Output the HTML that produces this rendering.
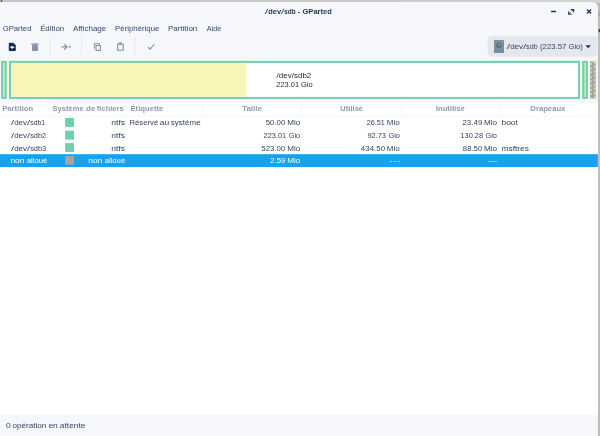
<!DOCTYPE html>
<html lang="fr">
<head>
<meta charset="utf-8">
<title>/dev/sdb - GParted</title>
<style>
html,body{margin:0;padding:0;}
body{width:600px;height:436px;overflow:hidden;background:#c8c8c8;position:relative;
  font-family:"Liberation Sans","DejaVu Sans",sans-serif;font-size:7.6px;color:#24344f;}
#root{position:absolute;left:0;top:0;width:600px;height:436px;overflow:hidden;will-change:transform;}
#root>*{position:absolute;}
.t{left:0;white-space:nowrap;line-height:12px;height:12px;font-size:0;}
.w{display:inline-block;width:0;line-height:12px;vertical-align:top;transform-origin:0 0;}
</style>
</head>
<body>
<div id="root">
<svg id="gfx" style="left:0;top:0" width="600" height="436" viewBox="0 0 600 436">
  <!-- desktop behind the window -->
  <rect x="0" y="0" width="600" height="436" fill="#bebebe"/>
  <rect x="0" y="0" width="200" height="3" fill="#c5c5c5"/>
  <rect x="200" y="0" width="200" height="3" fill="#c9c9c9"/>
  <rect x="400" y="0" width="120" height="3" fill="#cdcdcd"/>
  <rect x="520" y="0" width="80" height="3" fill="#d4d4d4"/>
  <rect x="0.900" y="0" width="1.300" height="2.400" fill="#555"/>
  <rect x="598.200" y="12" width="1.800" height="0.900" fill="#8e8e8e"/>
  <rect x="598.200" y="14.600" width="1.800" height="0.900" fill="#8e8e8e"/>
  <rect x="598.600" y="29" width="1.400" height="3.200" fill="#3e3e3e"/>
  <!-- window -->
  <path d="M0 436V3.200Q0 1.900 1.300 1.900H592.400A5.500 5.500 0 0 1 597.900 7.400V436z" fill="#f6f7fb"/>
  <!-- table -->
  <rect x="0" y="102.700" width="597.900" height="312.400" fill="#fff"/>
  <rect x="0" y="115.200" width="597.900" height="1.600" fill="#fafbfc"/>
  <rect x="0" y="154.200" width="597.900" height="12.800" fill="#16a2ef"/>
  <!-- swatches -->
  <g fill="#70d0ae">
    <rect x="65.100" y="117.950" width="8.900" height="9"/>
    <rect x="65.100" y="130.600" width="8.900" height="9"/>
    <rect x="65.100" y="143.100" width="8.900" height="8.900"/>
  </g>
  <rect x="65.100" y="156.100" width="8.900" height="8.700" fill="#a7a4a3"/>
  <!-- window controls -->
  <rect x="551.050" y="10.850" width="5.100" height="1.300" rx="0.300" fill="#1b3156"/>
  <path d="M570.900 9.550h2.750v2.750M568.750 11.450v2.750h2.750" stroke="#1b3156" stroke-width="1.150" fill="none"/>
  <path d="M573.400 9.800l-1.500 1.500M569 14l1.500-1.500" stroke="#1b3156" stroke-width="0.900" fill="none"/>
  <path d="M587.050 9.450l4.100 4.100M591.150 9.450l-4.100 4.100" stroke="#1b3156" stroke-width="1.300" fill="none"/>
  <!-- toolbar separators -->
  <g fill="#eaecf2">
    <rect x="49.800" y="37" width="1" height="18.500"/>
    <rect x="81.200" y="37" width="1" height="18.500"/>
    <rect x="134.800" y="37" width="1" height="18.500"/>
  </g>
  <!-- new -->
  <path d="M9.600 42.800h3.700l2.500 2.500v5q0 .7-.7.700h-5.600q-.7 0-.7-.7v-6.700q0-.8.800-.8z" fill="#112b53"/>
  <path d="M12.100 45.900v2.800" stroke="#fff" stroke-width="1.300"/><path d="M10.300 47.300h4" stroke="#fff" stroke-width="1.250"/>
  <!-- trash -->
  <path d="M31 43.400h8v1h-8zM34 42.900h2v1h-2zM32 44.800h6v5.500q0 .7-.7.700h-4.600q-.7 0-.7-.7z" fill="#8593ab"/>
  <!-- resize/move arrow -->
  <path d="M61.500 46.800h5.800M64.200 44.100l2.900 2.700l-2.900 2.700" stroke="#8593ab" stroke-width="1.150" fill="none"/>
  <circle cx="69.800" cy="46.800" r="1.050" fill="#8593ab"/>
  <!-- copy -->
  <path d="M94.400 48.700v-5.100h5v1.500" stroke="#8593ab" stroke-width="1" fill="none"/>
  <rect x="96" y="45.500" width="4.500" height="5" fill="#eceef4" stroke="#8593ab" stroke-width="1"/>
  <!-- paste -->
  <rect x="117.600" y="44.100" width="5.700" height="6.200" rx="0.400" fill="#eff0f5" stroke="#8593ab" stroke-width="1.100"/>
  <rect x="119.200" y="42.300" width="2.500" height="1.900" fill="#8593ab"/>
  <!-- apply -->
  <path d="M147.900 47.200l2 2l4.400-4.900" stroke="#8593ab" stroke-width="1.100" fill="none"/>
  <!-- device combo -->
  <rect x="487.700" y="36" width="109.900" height="20.800" rx="4.500" fill="#e4e7ee"/>
  <rect x="494" y="40" width="10" height="12.800" rx="0.800" fill="#7a8f9c"/>
  <circle cx="498.800" cy="45.400" r="2.500" fill="#53677a"/>
  <circle cx="499.100" cy="45.100" r="1.150" fill="#8fa2ae"/>
  <rect x="494" y="50.300" width="10" height="2.500" rx="0.800" fill="#74899a"/>
  <path d="M586 45.500h4.400l-2.200 2.600z" fill="#1b3156" stroke="#1b3156" stroke-width="0.500" stroke-linejoin="round"/>
  <!-- disk graphic -->
  <rect x="2.100" y="61.900" width="3.600" height="36" fill="#d3ecb6" stroke="#6fcfae" stroke-width="2"/>
  <rect x="10" y="61.900" width="569" height="36" fill="#fff" stroke="#6fcfae" stroke-width="2"/>
  <rect x="11" y="62.900" width="235.500" height="34" fill="#f8f7b9"/>
  <rect x="583.200" y="61.900" width="3.700" height="36" fill="#c9e9a9" stroke="#6fcfae" stroke-width="2"/>
  <rect x="590.100" y="60.900" width="5.600" height="38" fill="#a4a4a4"/>
  <path d="M591.300 62.900v36" stroke="#f1f095" stroke-width="1.050" stroke-dasharray="2 2.350"/>
  <path d="M594.600 61.700v37" stroke="#f1f095" stroke-width="1.050" stroke-dasharray="2 2.350"/>
  <path d="M591 61.500h4" stroke="#e8e78c" stroke-width="1" />
  <path d="M592 98.500h4" stroke="#d8d78c" stroke-width="1" />
  <!-- header separators -->
  <g fill="#f6f7fa">
    <rect x="48.800" y="102.700" width="1" height="13.800"/>
    <rect x="126.400" y="102.700" width="1" height="13.800"/>
    <rect x="202" y="102.700" width="1" height="13.800"/>
    <rect x="300.800" y="102.700" width="1" height="13.800"/>
    <rect x="400.800" y="102.700" width="1" height="13.800"/>
    <rect x="499.200" y="102.700" width="1" height="13.800"/>
  </g>
</svg>
<div id="title" class="t" aria-label="/dev/sdb - GParted" style="top:6.33px;color:#1f3355;font-weight:bold;"><span id="titlew0" class="w" style="font-size:7.7px;font-weight:normal;transform:translateX(264.85px) scaleX(1.5919);">/</span><span id="titlew1" class="w" style="font-size:7.7px;transform:translateX(268.25px) scaleX(0.9615);">dev</span><span id="titlew2" class="w" style="font-size:7.7px;font-weight:normal;transform:translateX(281.07px) scaleX(1.5434);">/</span><span id="titlew3" class="w" style="font-size:7.7px;transform:translateX(284.22px) scaleX(0.8387);">sdb</span> <span id="titlew4" class="w" style="font-size:7.7px;transform:translateX(297.70px) scaleX(1.0283);">-</span> <span id="titlew5" class="w" style="font-size:7.7px;transform:translateX(302.50px) scaleX(0.9795);">GParted</span></div>
<div id="m1" class="t" style="top:23.47px;color:#34476a;"><span id="m1w0" class="w" style="font-size:7.6px;transform:translateX(2.67px) scaleX(1.0166);">GParted</span></div>
<div id="m2" class="t" style="top:23.47px;color:#34476a;"><span id="m2w0" class="w" style="font-size:7.6px;transform:translateX(40.13px) scaleX(1.0338);">Édition</span></div>
<div id="m3" class="t" style="top:23.47px;color:#34476a;"><span id="m3w0" class="w" style="font-size:7.6px;transform:translateX(72.90px) scaleX(1.0599);">Affichage</span></div>
<div id="m4" class="t" style="top:23.47px;color:#34476a;"><span id="m4w0" class="w" style="font-size:7.6px;transform:translateX(115.10px) scaleX(1.0272);">Périphérique</span></div>
<div id="m5" class="t" style="top:23.47px;color:#34476a;"><span id="m5w0" class="w" style="font-size:7.6px;transform:translateX(167.88px) scaleX(1.0562);">Partition</span></div>
<div id="m6" class="t" style="top:23.47px;color:#34476a;"><span id="m6w0" class="w" style="font-size:7.6px;transform:translateX(206.72px) scaleX(0.9599);">Aide</span></div>
<div id="combo" class="t" aria-label="/dev/sdb (223.57 Gio)" style="top:41.37px;color:#364762;"><span id="combow0" class="w" style="font-size:7.6px;transform:translateX(506.83px) scaleX(1.5924);">/</span><span id="combow1" class="w" style="font-size:7.6px;transform:translateX(510.15px) scaleX(1.0502);">dev</span><span id="combow2" class="w" style="font-size:7.6px;transform:translateX(523.07px) scaleX(1.4787);">/</span><span id="combow3" class="w" style="font-size:7.6px;transform:translateX(526.12px) scaleX(0.9385);">sdb</span> <span id="combow4" class="w" style="font-size:7.6px;transform:translateX(539.97px) scaleX(1.0280);">(223.57</span> <span id="combow5" class="w" style="font-size:7.6px;transform:translateX(568.58px) scaleX(0.9860);">Gio)</span></div>
<div id="d1" class="t" style="top:70.47px;color:#2a2a2a;"><span id="d1w0" class="w" style="font-size:7.3px;transform:translateX(276.58px) scaleX(1.0970);">/dev/sdb2</span></div>
<div id="d2" class="t" style="top:79.47px;color:#2a2a2a;"><span id="d2w0" class="w" style="font-size:7.3px;transform:translateX(276.35px) scaleX(1.0185);">223.01</span> <span id="d2w1" class="w" style="font-size:7.3px;transform:translateX(301.00px) scaleX(1.0233);">Gio</span></div>
<div id="h1" class="t" style="top:102.77px;color:#8d99b1;font-weight:bold;"><span id="h1w0" class="w" style="font-size:7.3px;transform:translateX(2.25px) scaleX(1.0432);">Partition</span></div>
<div id="h2" class="t" style="top:102.77px;color:#8d99b1;font-weight:bold;"><span id="h2w0" class="w" style="font-size:7.3px;transform:translateX(52.55px) scaleX(1.0405);">Système</span> <span id="h2w1" class="w" style="font-size:7.3px;transform:translateX(86.07px) scaleX(1.1004);">de</span> <span id="h2w2" class="w" style="font-size:7.3px;transform:translateX(96.80px) scaleX(1.0373);">fichiers</span></div>
<div id="h3" class="t" style="top:102.77px;color:#8d99b1;font-weight:bold;"><span id="h3w0" class="w" style="font-size:7.3px;transform:translateX(130.50px) scaleX(1.0492);">Étiquette</span></div>
<div id="h4" class="t" style="top:102.77px;color:#8d99b1;font-weight:bold;"><span id="h4w0" class="w" style="font-size:7.3px;transform:translateX(242.23px) scaleX(1.0779);">Taille</span></div>
<div id="h5" class="t" style="top:102.77px;color:#8d99b1;font-weight:bold;"><span id="h5w0" class="w" style="font-size:7.3px;transform:translateX(340.37px) scaleX(1.0350);">Utilisé</span></div>
<div id="h6" class="t" style="top:102.77px;color:#8d99b1;font-weight:bold;"><span id="h6w0" class="w" style="font-size:7.3px;transform:translateX(435.87px) scaleX(1.0465);">Inutilisé</span></div>
<div id="h7" class="t" style="top:102.77px;color:#8d99b1;font-weight:bold;"><span id="h7w0" class="w" style="font-size:7.3px;transform:translateX(530.32px) scaleX(1.0550);">Drapeaux</span></div>
<div id="r0c0" class="t" aria-label="/dev/sdb1" style="top:116.77px;color:#33445f;"><span id="r0c0w0" class="w" style="font-size:7.6px;transform:translateX(11.08px) scaleX(1.4787);">/</span><span id="r0c0w1" class="w" style="font-size:7.6px;transform:translateX(14.20px) scaleX(1.0465);">dev</span><span id="r0c0w2" class="w" style="font-size:7.6px;transform:translateX(27.07px) scaleX(1.4787);">/</span><span id="r0c0w3" class="w" style="font-size:7.6px;transform:translateX(30.25px) scaleX(0.9062);">sdb1</span></div>
<div id="r0c1" class="t" style="top:116.77px;color:#33445f;"><span id="r0c1w0" class="w" style="font-size:7.6px;transform:translateX(111.13px) scaleX(1.1309);">ntfs</span></div>
<div id="r0c2" class="t" style="top:116.77px;color:#33445f;"><span id="r0c2w0" class="w" style="font-size:7.6px;transform:translateX(129.52px) scaleX(1.0130);">Réservé</span> <span id="r0c2w1" class="w" style="font-size:7.6px;transform:translateX(159.77px) scaleX(1.1163);">au</span> <span id="r0c2w2" class="w" style="font-size:7.6px;transform:translateX(170.83px) scaleX(1.0559);">système</span></div>
<div id="r0c3" class="t" style="top:116.77px;color:#33445f;"><span id="r0c3w0" class="w" style="font-size:7.6px;transform:translateX(265.65px) scaleX(1.0325);">50.00</span> <span id="r0c3w1" class="w" style="font-size:7.6px;transform:translateX(287.25px) scaleX(1.0661);">Mio</span></div>
<div id="r0c4" class="t" style="top:116.77px;color:#33445f;"><span id="r0c4w0" class="w" style="font-size:7.6px;transform:translateX(366.78px) scaleX(0.9509);">26.51</span> <span id="r0c4w1" class="w" style="font-size:7.6px;transform:translateX(386.80px) scaleX(1.0610);">Mio</span></div>
<div id="r0c5" class="t" style="top:116.77px;color:#33445f;"><span id="r0c5w0" class="w" style="font-size:7.6px;transform:translateX(462.45px) scaleX(1.0437);">23.49</span> <span id="r0c5w1" class="w" style="font-size:7.6px;transform:translateX(484.00px) scaleX(1.0661);">Mio</span></div>
<div id="r0c6" class="t" style="top:116.77px;color:#33445f;"><span id="r0c6w0" class="w" style="font-size:7.6px;transform:translateX(501.45px) scaleX(1.1073);">boot</span></div>
<div id="r1c0" class="t" aria-label="/dev/sdb2" style="top:130.42px;color:#33445f;"><span id="r1c0w0" class="w" style="font-size:7.6px;transform:translateX(11.08px) scaleX(1.4787);">/</span><span id="r1c0w1" class="w" style="font-size:7.6px;transform:translateX(14.20px) scaleX(1.0465);">dev</span><span id="r1c0w2" class="w" style="font-size:7.6px;transform:translateX(27.07px) scaleX(1.4787);">/</span><span id="r1c0w3" class="w" style="font-size:7.6px;transform:translateX(30.15px) scaleX(0.9751);">sdb2</span></div>
<div id="r1c1" class="t" style="top:130.42px;color:#33445f;"><span id="r1c1w0" class="w" style="font-size:7.6px;transform:translateX(111.13px) scaleX(1.1309);">ntfs</span></div>
<div id="r1c2" class="t" style="top:130.42px;color:#33445f;"><span id="r1c2w0" class="w" style="font-size:7.6px;transform:translateX(263.50px) scaleX(0.9780);">223.01</span> <span id="r1c2w1" class="w" style="font-size:7.6px;transform:translateX(288.72px) scaleX(0.9692);">Gio</span></div>
<div id="r1c3" class="t" style="top:130.42px;color:#33445f;"><span id="r1c3w0" class="w" style="font-size:7.6px;transform:translateX(367.38px) scaleX(0.9730);">92.73</span> <span id="r1c3w1" class="w" style="font-size:7.6px;transform:translateX(388.38px) scaleX(0.9783);">Gio</span></div>
<div id="r1c4" class="t" style="top:130.42px;color:#33445f;"><span id="r1c4w0" class="w" style="font-size:7.6px;transform:translateX(460.37px) scaleX(0.9778);">130.28</span> <span id="r1c4w1" class="w" style="font-size:7.6px;transform:translateX(485.48px) scaleX(0.9687);">Gio</span></div>
<div id="r2c0" class="t" aria-label="/dev/sdb3" style="top:143.07px;color:#33445f;"><span id="r2c0w0" class="w" style="font-size:7.6px;transform:translateX(11.08px) scaleX(1.4787);">/</span><span id="r2c0w1" class="w" style="font-size:7.6px;transform:translateX(14.20px) scaleX(1.0465);">dev</span><span id="r2c0w2" class="w" style="font-size:7.6px;transform:translateX(27.07px) scaleX(1.4787);">/</span><span id="r2c0w3" class="w" style="font-size:7.6px;transform:translateX(30.15px) scaleX(0.9751);">sdb3</span></div>
<div id="r2c1" class="t" style="top:143.07px;color:#33445f;"><span id="r2c1w0" class="w" style="font-size:7.6px;transform:translateX(111.13px) scaleX(1.1309);">ntfs</span></div>
<div id="r2c2" class="t" style="top:143.07px;color:#33445f;"><span id="r2c2w0" class="w" style="font-size:7.6px;transform:translateX(261.32px) scaleX(1.0242);">523.00</span> <span id="r2c2w1" class="w" style="font-size:7.6px;transform:translateX(287.25px) scaleX(1.0661);">Mio</span></div>
<div id="r2c3" class="t" style="top:143.07px;color:#33445f;"><span id="r2c3w0" class="w" style="font-size:7.6px;transform:translateX(360.82px) scaleX(1.0463);">434.50</span> <span id="r2c3w1" class="w" style="font-size:7.6px;transform:translateX(386.80px) scaleX(1.0610);">Mio</span></div>
<div id="r2c4" class="t" style="top:143.07px;color:#33445f;"><span id="r2c4w0" class="w" style="font-size:7.6px;transform:translateX(462.80px) scaleX(1.0245);">88.50</span> <span id="r2c4w1" class="w" style="font-size:7.6px;transform:translateX(484.00px) scaleX(1.0661);">Mio</span></div>
<div id="r2c5" class="t" style="top:143.07px;color:#33445f;"><span id="r2c5w0" class="w" style="font-size:7.6px;transform:translateX(501.45px) scaleX(1.1053);">msftres</span></div>
<div id="r3c0" class="t" style="top:154.72px;color:#ffffff;"><span id="r3c0w0" class="w" style="font-size:7.6px;transform:translateX(10.40px) scaleX(1.1129);">non</span> <span id="r3c0w1" class="w" style="font-size:7.6px;transform:translateX(26.70px) scaleX(1.0158);">alloué</span></div>
<div id="r3c1" class="t" style="top:154.72px;color:#ffffff;"><span id="r3c1w0" class="w" style="font-size:7.6px;transform:translateX(88.25px) scaleX(1.1072);">non</span> <span id="r3c1w1" class="w" style="font-size:7.6px;transform:translateX(104.63px) scaleX(1.0131);">alloué</span></div>
<div id="r3c2" class="t" style="top:154.72px;color:#ffffff;"><span id="r3c2w0" class="w" style="font-size:7.6px;transform:translateX(270.20px) scaleX(1.0216);">2.59</span> <span id="r3c2w1" class="w" style="font-size:7.6px;transform:translateX(287.25px) scaleX(1.0661);">Mio</span></div>
<div id="r3c3" class="t" style="top:154.72px;color:#ffffff;"><span id="r3c3w0" class="w" style="font-size:7.6px;letter-spacing:1.100px;transform:translateX(390.05px) scaleX(1.0000);">---</span></div>
<div id="r3c4" class="t" style="top:154.72px;color:#ffffff;"><span id="r3c4w0" class="w" style="font-size:7.6px;letter-spacing:0.725px;transform:translateX(487.93px) scaleX(1.0000);">---</span></div>
<div id="status" class="t" style="top:419.67px;color:#34476a;"><span id="statusw0" class="w" style="font-size:7.6px;transform:translateX(6.03px) scaleX(1.1378);">0</span> <span id="statusw1" class="w" style="font-size:7.6px;transform:translateX(12.38px) scaleX(1.0727);">opération</span> <span id="statusw2" class="w" style="font-size:7.6px;transform:translateX(48.40px) scaleX(1.1102);">en</span> <span id="statusw3" class="w" style="font-size:7.6px;transform:translateX(59.80px) scaleX(1.1077);">attente</span></div>
</div>
</body>
</html>
